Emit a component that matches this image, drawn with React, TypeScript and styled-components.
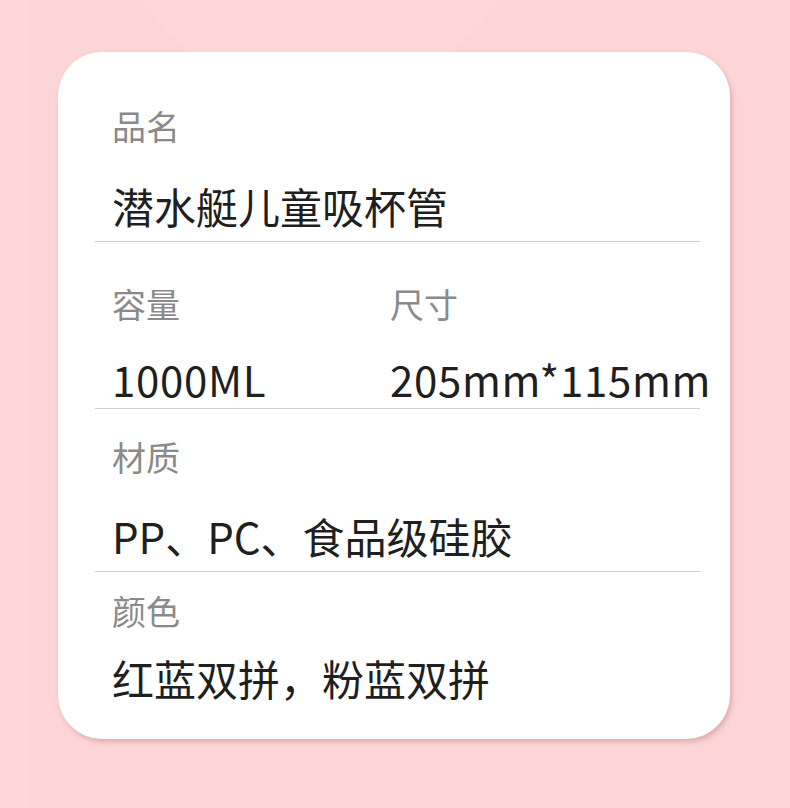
import styled, { createGlobalStyle } from 'styled-components';

const GlobalStyle = createGlobalStyle`
  html, body {
    margin: 0;
    padding: 0;
  }

  body {
    background-color: #fdd5d6;
    font-family: "Noto Sans CJK SC", "Noto Sans", sans-serif;
  }
`;

// pad: [top, bottom] of each block, gap: label -> value
const specs = [
  { pad: [54, 10], gap: 35, spacing: 0, cols: [{ label: '品名', value: '潜水艇儿童吸杯管' }] },
  {
    pad: [42, 4],
    gap: 30,
    spacing: 0.7,
    cols: [
      { label: '容量', value: '1000ML' },
      { label: '尺寸', value: '205mm*115mm' },
    ],
  },
  { pad: [28, 10], gap: 34, spacing: 0, cols: [{ label: '材质', value: 'PP、PC、食品级硅胶' }] },
  { pad: [19, 0], gap: 22, spacing: 0, cols: [{ label: '颜色', value: '红蓝双拼，粉蓝双拼' }] },
];

export default function App() {
  return (
    <>
      <GlobalStyle />
      <Page>
        <Card>
          {specs.map((spec, i) => (
            <Section key={i} $top={spec.pad[0]} $bottom={spec.pad[1]} $last={i === specs.length - 1}>
              <Columns $count={spec.cols.length}>
                {spec.cols.map((col) => (
                  <Field key={col.label} $gap={spec.gap}>
                    <Label>{col.label}</Label>
                    <Value $spacing={spec.spacing}>{col.value}</Value>
                  </Field>
                ))}
              </Columns>
            </Section>
          ))}
        </Card>
      </Page>
    </>
  );
}

const Page = styled.div`
  min-height: 808px;
  padding-top: 52px;
  box-sizing: border-box;
  background:
    radial-gradient(circle at 320px -120px, rgba(255, 218, 219, 0.6) 0 215px, transparent 216px),
    linear-gradient(90deg, #fed8d9 0 30px, #fdd5d6 30px);
`;

const Card = styled.div`
  width: 672px;
  height: 687px;
  margin-left: 58px;
  padding: 0 30px 0 37px;
  box-sizing: border-box;
  background-color: #ffffff;
  border-radius: 44px;
  box-shadow: 2px 3px 5px rgba(170, 100, 102, 0.35);
  display: flex;
  flex-direction: column;
`;

const Section = styled.div<{ $top: number; $bottom: number; $last: boolean }>`
  padding: ${(p) => p.$top}px 0 ${(p) => p.$bottom}px 17px;
  border-bottom: ${(p) => (p.$last ? 'none' : '1px solid #cfcfcf')};
`;

const Columns = styled.div<{ $count: number }>`
  display: grid;
  grid-template-columns: ${(p) => (p.$count > 1 ? '278px 1fr' : '1fr')};
`;

const Field = styled.div<{ $gap: number }>`
  display: flex;
  flex-direction: column;
  gap: ${(p) => p.$gap}px;
`;

const Label = styled.div`
  font-size: 34px;
  line-height: 40px;
  color: #8a8a8a;
  white-space: nowrap;
`;

const Value = styled.div<{ $spacing: number }>`
  font-size: 42px;
  line-height: 50px;
  color: #1f1f1f;
  letter-spacing: ${(p) => p.$spacing}px;
  white-space: nowrap;
`;
